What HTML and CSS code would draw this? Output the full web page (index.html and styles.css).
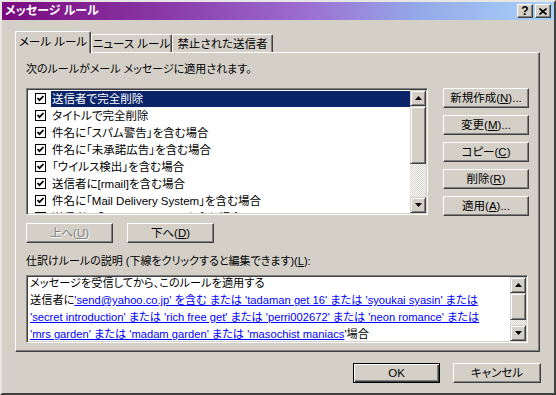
FILE: index.html
```html
<!DOCTYPE html>
<html lang="ja">
<head>
    <meta charset="UTF-8">
    <title>メッセージ ルール</title>
    <link rel="stylesheet" href="styles.css">
</head>
<body>
<div class="dialog">
    <div class="titlebar">
        <span class="title">メッセージ ルール</span>
        <div class="title-btns">
            <span class="tbtn help">?</span>
            <span class="tbtn"><svg width="8" height="7" viewBox="0 0 8 7"><path d="M0.5 0.5 L7.5 6.5 M7.5 0.5 L0.5 6.5" stroke="#000" stroke-width="1.6"/></svg></span>
        </div>
    </div>
    <div class="body">
        <div class="tabs">
            <div class="tab active">メール ルール</div>
            <div class="tab tab2">ニュース ルール</div>
            <div class="tab tab3">禁止された送信者</div>
        </div>
        <div class="panel">
            <div class="label">次のルールがメール メッセージに適用されます。</div>
            <div class="rules-row">
                <div class="listbox">
                    <ul class="rules">
                        <li class="selected"><svg class="chk" width="11" height="11" viewBox="0 0 11 11"><rect x="0.5" y="0.5" width="10" height="10" fill="#fff" stroke="#000"/><path d="M2.5 5 L4.5 7.2 L8.5 3" stroke="#000" stroke-width="1.8" fill="none"/></svg><span class="txt">送信者で完全削除</span></li>
                        <li><svg class="chk" width="11" height="11" viewBox="0 0 11 11"><rect x="0.5" y="0.5" width="10" height="10" fill="#fff" stroke="#000"/><path d="M2.5 5 L4.5 7.2 L8.5 3" stroke="#000" stroke-width="1.8" fill="none"/></svg><span class="txt">タイトルで完全削除</span></li>
                        <li><svg class="chk" width="11" height="11" viewBox="0 0 11 11"><rect x="0.5" y="0.5" width="10" height="10" fill="#fff" stroke="#000"/><path d="M2.5 5 L4.5 7.2 L8.5 3" stroke="#000" stroke-width="1.8" fill="none"/></svg><span class="txt">件名に「スパム警告」を含む場合</span></li>
                        <li><svg class="chk" width="11" height="11" viewBox="0 0 11 11"><rect x="0.5" y="0.5" width="10" height="10" fill="#fff" stroke="#000"/><path d="M2.5 5 L4.5 7.2 L8.5 3" stroke="#000" stroke-width="1.8" fill="none"/></svg><span class="txt">件名に「未承諾広告」を含む場合</span></li>
                        <li><svg class="chk" width="11" height="11" viewBox="0 0 11 11"><rect x="0.5" y="0.5" width="10" height="10" fill="#fff" stroke="#000"/><path d="M2.5 5 L4.5 7.2 L8.5 3" stroke="#000" stroke-width="1.8" fill="none"/></svg><span class="txt">「ウイルス検出」を含む場合</span></li>
                        <li><svg class="chk" width="11" height="11" viewBox="0 0 11 11"><rect x="0.5" y="0.5" width="10" height="10" fill="#fff" stroke="#000"/><path d="M2.5 5 L4.5 7.2 L8.5 3" stroke="#000" stroke-width="1.8" fill="none"/></svg><span class="txt">送信者に[rmail]を含む場合</span></li>
                        <li><svg class="chk" width="11" height="11" viewBox="0 0 11 11"><rect x="0.5" y="0.5" width="10" height="10" fill="#fff" stroke="#000"/><path d="M2.5 5 L4.5 7.2 L8.5 3" stroke="#000" stroke-width="1.8" fill="none"/></svg><span class="txt">件名に「Mail Delivery System」を含む場合</span></li>
                        <li><svg class="chk" width="11" height="11" viewBox="0 0 11 11"><rect x="0.5" y="0.5" width="10" height="10" fill="#fff" stroke="#000"/><path d="M2.5 5 L4.5 7.2 L8.5 3" stroke="#000" stroke-width="1.8" fill="none"/></svg><span class="txt">送信者に「mailer-daemon」を含む場合</span></li>
                    </ul>
                    <div class="scrollbar">
                        <span class="sbtn"><svg width="7" height="4" viewBox="0 0 7 4"><path d="M3.5 0 L7 4 L0 4 Z" fill="#000"/></svg></span>
                        <span class="thumb list-thumb"></span>
                        <span class="track"></span>
                        <span class="sbtn"><svg width="7" height="4" viewBox="0 0 7 4"><path d="M0 0 L7 0 L3.5 4 Z" fill="#000"/></svg></span>
                    </div>
                </div>
                <div class="side-btns">
                    <span class="btn">新規作成(<u>N</u>)...</span>
                    <span class="btn">変更(<u>M</u>)...</span>
                    <span class="btn">コピー(<u>C</u>)</span>
                    <span class="btn">削除(<u>R</u>)</span>
                    <span class="btn">適用(<u>A</u>)...</span>
                </div>
            </div>
            <div class="order-btns">
                <span class="btn disabled">上へ(<u>U</u>)</span>
                <span class="btn">下へ(<u>D</u>)</span>
            </div>
            <div class="label desc-label">仕訳けルールの説明 (下線をクリックすると編集できます)(<u>L</u>):</div>
            <div class="descbox">
                <div class="desc-text">
                    <div>メッセージを受信してから、このルールを適用する</div>
                    <div>送信者に<a href="#">'send@yahoo.co.jp' を含む または 'tadaman get 16' または 'syoukai syasin' または</a></div>
                    <div><a href="#">'secret introduction' または 'rich free get' または 'perri002672' または 'neon romance' または</a></div>
                    <div><a href="#">'mrs garden' または 'madam garden' または 'masochist maniacs</a>'場合</div>
                    <div>サーバーから削除する</div>
                </div>
                <div class="scrollbar">
                    <span class="sbtn"><svg width="7" height="4" viewBox="0 0 7 4"><path d="M3.5 0 L7 4 L0 4 Z" fill="#000"/></svg></span>
                    <span class="thumb desc-thumb"></span>
                    <span class="track"></span>
                    <span class="sbtn"><svg width="7" height="4" viewBox="0 0 7 4"><path d="M0 0 L7 0 L3.5 4 Z" fill="#000"/></svg></span>
                </div>
            </div>
        </div>
        <div class="footer">
            <span class="btn default">OK</span>
            <span class="btn">キャンセル</span>
        </div>
    </div>
</div>
</body>
</html>
```

FILE: styles.css
```css
@charset "UTF-8";
/* reset */
body,ul,li,div{margin:0;padding:0}
body{
    font:11px/16px "Liberation Sans", "Noto Sans CJK JP", sans-serif;
    font-feature-settings:"palt";
    color:#000;
    background:#d4d0c8;
}
ul{list-style:none}
svg{display:block}

.dialog{
    width:556px;
    height:395px;
    box-sizing:border-box;
    border:2px solid;
    border-color:#e8e6e0 #404040 #404040 #e8e6e0;
    background:#d4d0c8;
}
.titlebar{
    height:18px;
    display:flex;
    align-items:center;
    justify-content:space-between;
    padding:0 3px 0 3px;
    background:linear-gradient(90deg,#7a0a7e 0%,#8a3aa8 30%,#9c6ed2 55%,#94a8e8 75%,#a8d2fa 100%);
}
.title{
    color:#fff;
    font-weight:bold;
    font-size:12px;
}
.title-btns{
    display:flex;
    gap:2px;
}
.tbtn{
    width:16px;
    height:14px;
    box-sizing:border-box;
    display:flex;
    align-items:center;
    justify-content:center;
    background:#d4d0c8;
    border:1px solid;
    border-color:#fff #404040 #404040 #fff;
    box-shadow:inset -1px -1px #808080;
}
.help{
    font:bold 12px/12px "Liberation Sans", sans-serif;
}

.body{
    padding:11px 0 0 13px;
}
.tabs{
    display:flex;
    align-items:flex-end;
    height:21px;
    font-size:11.5px;
}
.tab{
    height:18px;
    box-sizing:border-box;
    display:flex;
    align-items:center;
    justify-content:center;
    white-space:nowrap;
    border-top:1px solid #fff;
    border-left:1px solid #fff;
    border-right:1px solid #404040;
    box-shadow:inset -1px 0 #808080;
    border-radius:2px 2px 0 0;
}
.tab.active{
    width:76px;
    height:22px;
    margin-bottom:-1px;
    padding-bottom:1px;
    background:#d4d0c8;
    position:relative;
    z-index:1;
}
.tab2{width:81px}
.tab3{width:101px}

.panel{
    width:525px;
    height:300px;
    box-sizing:border-box;
    padding:8px 0 0 10px;
    border:1px solid;
    border-color:#fff #404040 #404040 #fff;
    box-shadow:inset -1px -1px #808080;
}
.rules-row{
    display:flex;
    margin-top:11px;
}
.listbox,.descbox{
    display:flex;
    box-sizing:border-box;
    background:#fff;
    border:1px solid;
    border-color:#808080 #fff #fff #808080;
    box-shadow:inset 1px 1px #404040, inset -1px -1px #d4d0c8;
    padding:1px;
}
.listbox{
    width:402px;
    height:127px;
}
.rules{
    flex:1;
    overflow:hidden;
    font-size:11.5px;
}
.rules li{
    height:17px;
    display:flex;
    align-items:center;
    padding-left:7px;
    white-space:nowrap;
}
.rules .chk{
    margin-right:5px;
    flex:none;
}
.rules .txt{
    flex:1;
    padding-left:1px;
    line-height:16px;
}
.rules .selected .txt{
    background:#0a246a;
    color:#fff;
}

.scrollbar{
    width:16px;
    display:flex;
    flex-direction:column;
}
.sbtn,.thumb{
    box-sizing:border-box;
    background:#d4d0c8;
    border:1px solid;
    border-color:#d4d0c8 #404040 #404040 #d4d0c8;
    box-shadow:inset 1px 1px #fff, inset -1px -1px #808080;
}
.sbtn{
    height:16px;
    display:flex;
    align-items:center;
    justify-content:center;
}
.list-thumb{height:58px}
.desc-thumb{height:27px}
.track{
    flex:1;
    background:repeating-conic-gradient(#fff 0 25%,#d4d0c8 0 50%) 0 0/2px 2px;
}

.side-btns{
    margin-left:15px;
    display:flex;
    flex-direction:column;
    gap:7px;
}
.btn{
    width:87px;
    height:20px;
    box-sizing:border-box;
    display:flex;
    align-items:center;
    justify-content:center;
    background:#d4d0c8;
    border:1px solid;
    border-color:#fff #404040 #404040 #fff;
    box-shadow:inset -1px -1px #808080;
    white-space:nowrap;
    font-size:11.5px;
}
.side-btns .btn{width:86px}
.btn.disabled{
    color:#808080;
    text-shadow:1px 1px #fff;
}
.order-btns{
    display:flex;
    gap:14px;
    margin-top:7px;
}
.desc-label{
    margin-top:10px;
}
.descbox{
    margin-top:6px;
    width:502px;
    height:68px;
}
.desc-text{
    flex:1;
    overflow:hidden;
    padding-left:2px;
    line-height:17px;
    white-space:nowrap;
    margin-top:-2px;
    font-size:11.2px;
}
.desc-text a{
    color:#0000ff;
    text-decoration:underline;
}

.footer{
    display:flex;
    justify-content:flex-end;
    gap:13px;
    margin-top:11px;
    padding-right:13px;
}
.btn.default{
    border:1px solid #000;
    box-shadow:inset 1px 1px #fff, inset -1px -1px #404040, inset -2px -2px #808080;
}
.footer .btn:last-child{width:88px}
```
